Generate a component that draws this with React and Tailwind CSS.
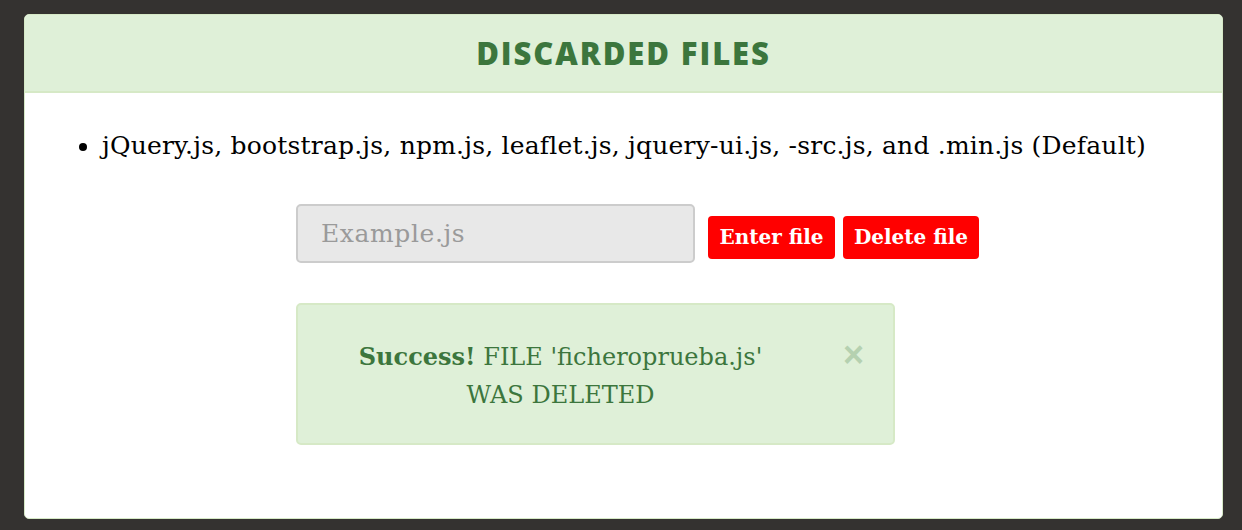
import React, { useState } from 'react';

const slab = { fontFamily: '"DejaVu Serif", serif' };

export default function App() {
  const [file, setFile] = useState('');
  const [showAlert, setShowAlert] = useState(true);

  return (
    <div className="w-[1242px] h-[530px] bg-[#343230] pt-[14px] px-[20px]">
      <div className="ml-[4px] w-[1199px] h-[505px] bg-white border border-[#d6e9c6] rounded-[5px] overflow-hidden">

        {/* HEADER */}
        <div className="h-[78px] bg-[#dff0d8] border-b-2 border-[#d6e9c6] flex items-center justify-center">
          <h1
            className="text-[#3c763d] text-[31px] tracking-[1.9px]"
            style={{ fontFamily: '"Open Sans", "Liberation Sans", sans-serif', fontWeight: 800 }}
          >
            DISCARDED FILES
          </h1>
        </div>

        {/* BODY */}
        <div className="pt-[36px]" style={slab}>
          <ul className="list-disc pl-[76px] text-[25px] leading-[34px] text-black tracking-[0.2px]">
            <li className="pl-[1px]">
              jQuery.js, bootstrap.js, npm.js, leaflet.js, jquery-ui.js, -src.js, and .min.js (Default)
            </li>
          </ul>

          <div className="flex items-center mt-[41px] pl-[271px]">
            <input
              type="text"
              value={file}
              onChange={(e) => setFile(e.target.value)}
              placeholder="Example.js"
              className="w-[399px] h-[59px] bg-[#e8e8e8] border-2 border-[#cccccc] rounded-[5px] px-[23px] text-[25px] text-[#555] placeholder:text-[#9a9a9a] outline-none tracking-[0.6px]"
              style={slab}
            />
            <button
              type="button"
              className="ml-[13px] mt-[7px] w-[127px] h-[43px] bg-[#ff0000] text-white text-[20px] font-bold rounded-[4px]"
              style={slab}
            >
              Enter file
            </button>
            <button
              type="button"
              className="ml-[8px] mt-[7px] w-[136px] h-[43px] bg-[#ff0000] text-white text-[20px] font-bold rounded-[4px]"
              style={slab}
            >
              Delete file
            </button>
          </div>

          {showAlert && (
            <div className="relative ml-[271px] mt-[40px] w-[599px] h-[142px] bg-[#dff0d8] border-2 border-[#d6e9c6] rounded-[5px] flex items-center pl-[15px] pr-[85px]">
              <p className="flex-1 mt-[3px] text-center text-[#3c763d] text-[24px] leading-[38px]">
                <strong>Success!</strong> FILE 'ficheroprueba.js'
                <br />
                WAS DELETED
              </p>
              <button
                type="button"
                onClick={() => setShowAlert(false)}
                className="absolute right-[29px] top-[32px] text-[#3c763d] opacity-25 text-[36px] font-bold leading-none"
                style={{ fontFamily: '"Liberation Sans", sans-serif' }}
              >
                ×
              </button>
            </div>
          )}
        </div>

      </div>
    </div>
  );
}
